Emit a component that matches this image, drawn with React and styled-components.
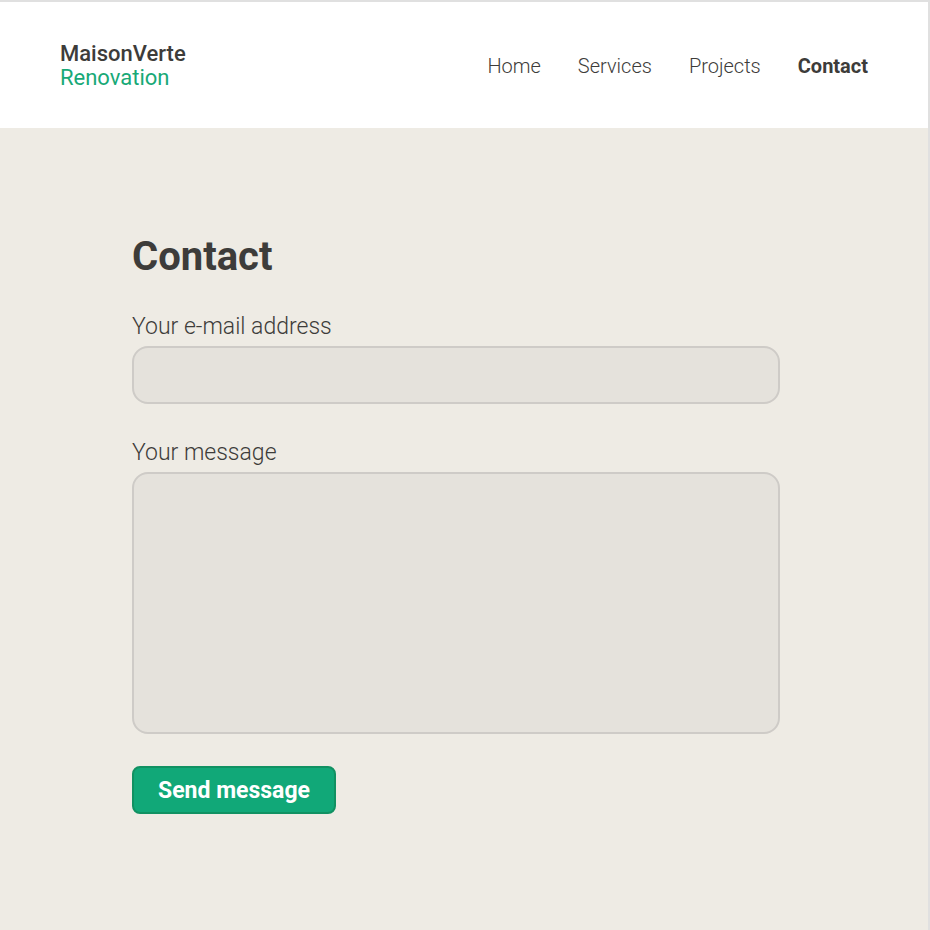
import React, { useState } from 'react';
import styled, { createGlobalStyle } from 'styled-components';

const GlobalStyle = createGlobalStyle`
  * {
    box-sizing: border-box;
  }

  body {
    margin: 0;
    background-color: #eeebe4;
    color: #3d3c3a;
    font-family: Roboto, 'Liberation Sans', sans-serif;
  }
`;

const Page = styled.div`
  min-height: 100vh;
  border-top: 2px solid #e0e0e0;
  border-right: 2px solid #e0e0e0;
`;

const Header = styled.header`
  display: flex;
  align-items: center;
  justify-content: space-between;
  padding: 40px 60px 38px;
  background-color: #fff;
`;

const Logo = styled.a`
  display: flex;
  flex-direction: column;
  color: inherit;
  font-size: 22px;
  line-height: 24px;
  text-decoration: none;
`;

const LogoName = styled.span`
  font-weight: 500;
`;

const LogoTagline = styled.span`
  color: #18a977;
`;

const Nav = styled.nav`
  display: flex;
  gap: 37px;
`;

const NavLink = styled.a`
  color: inherit;
  font-size: 20px;
  font-weight: ${(props) => (props.$active ? 700 : 300)};
  line-height: 24px;
  text-decoration: none;
`;

const Main = styled.main`
  padding: 104px 148px 104px 132px;
`;

const Title = styled.h1`
  margin: 0 0 28px;
  font-size: 40px;
  font-weight: 700;
  line-height: 50px;
`;

const Form = styled.form`
  display: flex;
  flex-direction: column;
  align-items: flex-start;
  gap: 32px;
`;

const Field = styled.div`
  display: flex;
  flex-direction: column;
  gap: 2px;
  width: 100%;
`;

const Label = styled.label`
  font-size: 23px;
  font-weight: 300;
  line-height: 34px;
`;

const Input = styled.input`
  width: 100%;
  height: 58px;
  padding: 12px 16px;
  border: 2px solid #cecbc7;
  border-radius: 16px;
  background-color: #e5e2dc;
  color: inherit;
  font: inherit;
  font-size: 23px;

  &:focus {
    outline: none;
    border-color: #18a977;
  }
`;

const TextArea = styled(Input)`
  display: block;
  height: 262px;
  resize: none;
`;

const SubmitButton = styled.button`
  padding: 9px 24px 7px;
  border: 2px solid #119162;
  border-radius: 8px;
  background-color: #11a878;
  color: #fff;
  font-family: inherit;
  font-size: 23px;
  font-weight: 700;
  line-height: 28px;
  cursor: pointer;

  &:hover {
    background-color: #119162;
  }
`;

const links = ['Home', 'Services', 'Projects', 'Contact'];

const App = () => {
  const [email, setEmail] = useState('');
  const [message, setMessage] = useState('');

  const handleSubmit = (e) => {
    e.preventDefault();
    setEmail('');
    setMessage('');
  };

  return (
    <Page>
      <GlobalStyle />
      <Header>
        <Logo href="#home">
          <LogoName>MaisonVerte</LogoName>
          <LogoTagline>Renovation</LogoTagline>
        </Logo>
        <Nav>
          {links.map((link) => (
            <NavLink key={link} href={`#${link.toLowerCase()}`} $active={link === 'Contact'}>
              {link}
            </NavLink>
          ))}
        </Nav>
      </Header>
      <Main>
        <Title>Contact</Title>
        <Form onSubmit={handleSubmit}>
          <Field>
            <Label htmlFor="email">Your e-mail address</Label>
            <Input id="email" type="email" value={email} onChange={(e) => setEmail(e.target.value)} />
          </Field>
          <Field>
            <Label htmlFor="message">Your message</Label>
            <TextArea
              as="textarea"
              id="message"
              value={message}
              onChange={(e) => setMessage(e.target.value)}
            />
          </Field>
          <SubmitButton type="submit">Send message</SubmitButton>
        </Form>
      </Main>
    </Page>
  );
};

export default App;
